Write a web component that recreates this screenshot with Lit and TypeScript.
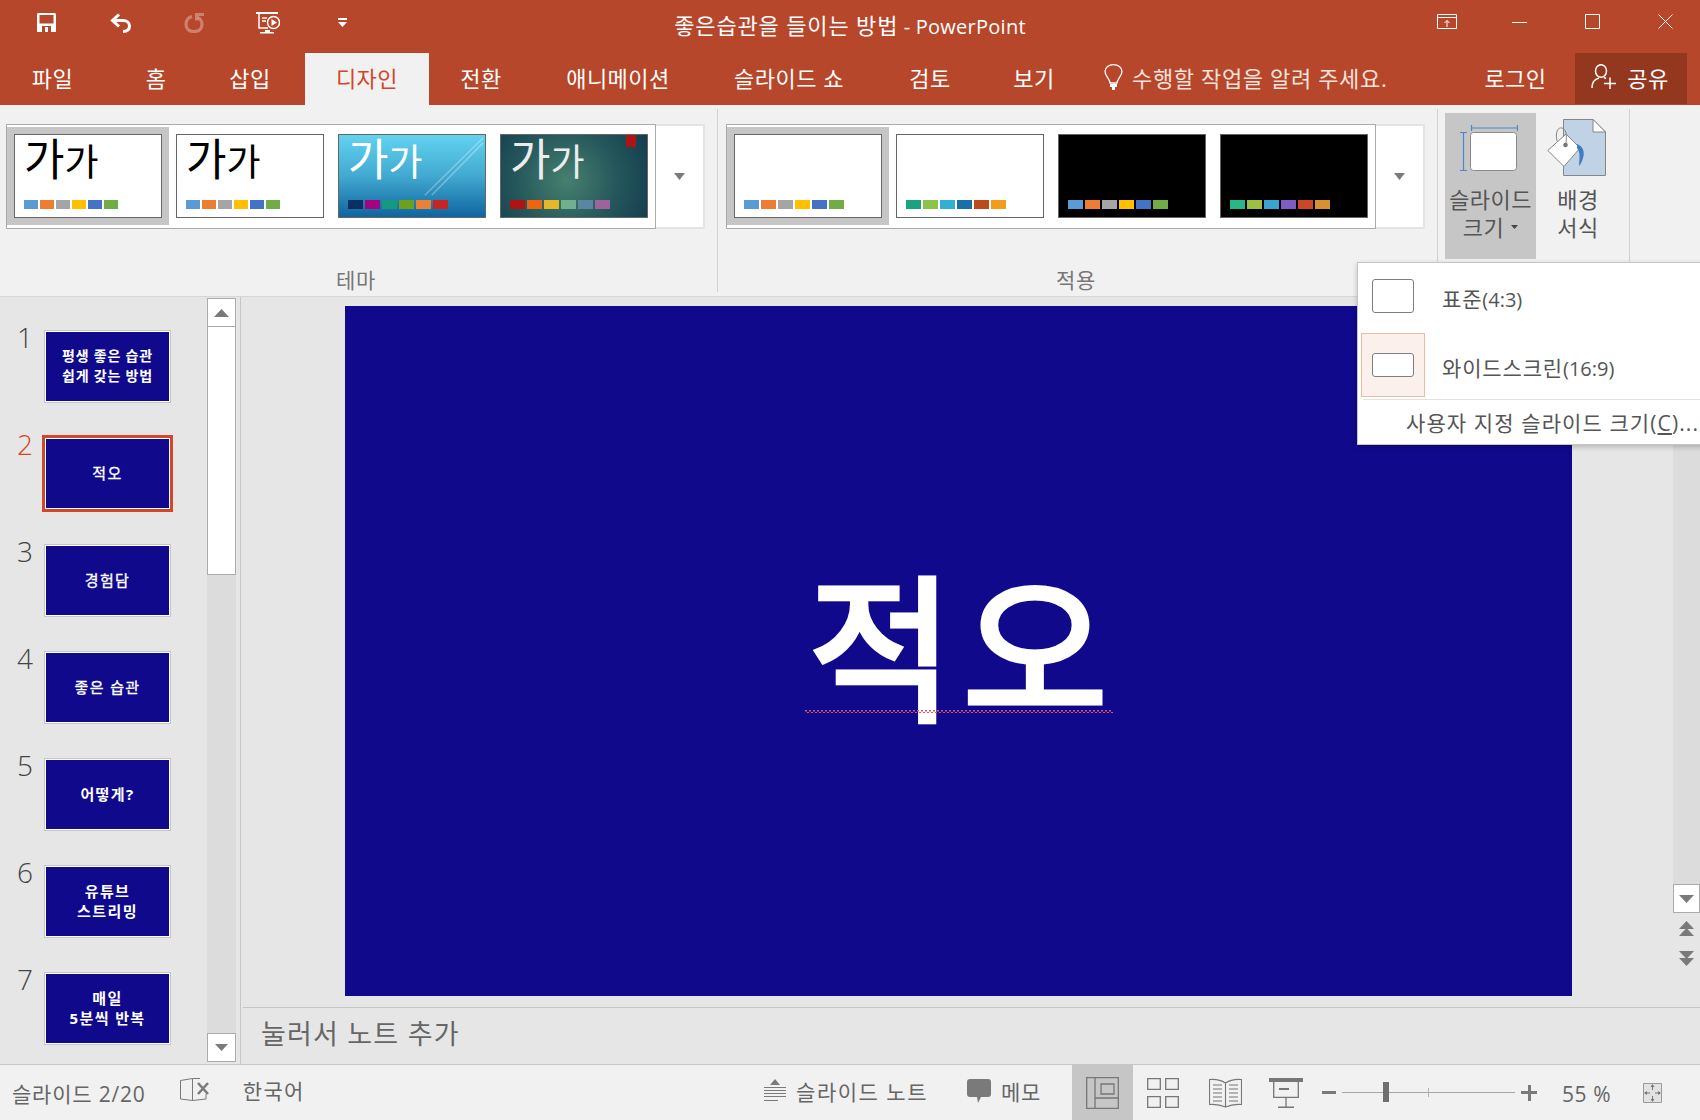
import { LitElement, html, css, svg } from 'lit';
import { customElement } from 'lit/decorators.js';

const tabs = ['파일', '홈', '삽입', '디자인', '전환', '애니메이션', '슬라이드 쇼', '검토', '보기'];

const office = ['#5b9bd5', '#ed7d31', '#a5a5a5', '#ffc000', '#4472c4', '#70ad47'];

const themes = [
  { cls: 'plain', colors: office, narrow: true },
  { cls: 'plain', colors: office, narrow: true },
  { cls: 'sky', colors: ['#0b2f63', '#a5027f', '#159a80', '#6fa01c', '#e98136', '#c72424'] },
  { cls: 'teal', colors: ['#ae1411', '#ee6510', '#e6b729', '#6fb08e', '#5a86a0', '#9e629c'] },
];

const variants = [
  { cls: 'blank', colors: office },
  { cls: 'blank', colors: ['#1ba27f', '#8cc44a', '#33afd2', '#1b6fa8', '#bb4b1a', '#f39c1a'] },
  { cls: 'dark', colors: office },
  { cls: 'dark', colors: ['#2bb58d', '#9cc044', '#3ba3d0', '#7e5cc2', '#c9482a', '#d98f32'] },
];

const slides = [
  { lines: ['평생 좋은 습관', '쉽게 갖는 방법'], bold: true, small: true },
  { lines: ['적오'] },
  { lines: ['경험담'] },
  { lines: ['좋은 습관'] },
  { lines: ['어떻게?'], bold: true },
  { lines: ['유튜브', '스트리밍'], bold: true },
  { lines: ['매일', '5분씩 반복'], bold: true },
];

const caret = (w = 12, h = 8, up = false, fill = '#7a7a7a') => html`
  <svg width=${w} height=${h} viewBox="0 0 12 8" preserveAspectRatio="none">
    <path fill=${fill} d=${up ? 'M6 0L12 8H0Z' : 'M0 0H12L6 8Z'}></path>
  </svg>
`;

const icons = {
  save: svg`<path fill="#fff" fill-rule="evenodd" d="M1 0H18L19 1V19H0V1ZM2.5 2V10.5H16.5V2ZM5 13V19H14V13ZM8 14H11V19H8Z"></path>`,
  undo: svg`<path fill="none" stroke="#fff" stroke-width="3" d="M9 1.5L2.5 7.5L9 13.5M3 7.5H13C17 7.5 19.5 10 19.5 13C19.5 16.5 17 18.5 13 18.5"></path>`,
  redo: svg`
    <path fill="none" stroke="#fff" stroke-opacity=".32" stroke-width="3.2" d="M8 3.500C4.500 4.500 2 7.500 2 11.500C2 16 5.500 18.500 10 18.500C14.500 18.500 18 16 18 11.500C18 8.500 16.500 6 14 4.500"></path>
    <path fill="#fff" fill-opacity=".32" d="M11 0H20V3H14.500V7.500H11Z"></path>
  `,
  present: svg`
    <path fill="#fff" d="M0 0H22V2H0ZM9 18H14V20H18V21.500H4V20H9Z"></path>
    <path fill="none" stroke="#fff" stroke-width="1.500" d="M3 2V16H12M6 6H11M6 9H10"></path>
    <circle cx="17.500" cy="10.500" r="6" fill="#b7472a" stroke="#fff" stroke-width="1.500"></circle>
    <path fill="#fff" d="M15.500 7L21 10.500L15.500 14Z"></path>
  `,
  ribbonOpts: svg`
    <path fill="none" stroke="#fff" d="M.5.5H19.500V14.500H.5ZM.5 3.500H19.500"></path>
    <path fill="none" stroke="#fff" d="M10 13V6.500M7.500 9L10 6.500L12.500 9"></path>
  `,
  bulb: svg`
    <path fill="none" stroke="#fff" stroke-width="1.300" d="M6 19C6 15 1 12 1 7.500C1 3.500 5 .7 9.500 .7C14 .7 18 3.500 18 7.500C18 12 13 15 13 19Z"></path>
    <path fill="#fff" d="M6 20H13V23H11V26H8V23H6Z"></path>
  `,
  person: svg`
    <ellipse cx="10" cy="7" rx="5.500" ry="6.300" fill="none" stroke="#fff" stroke-width="1.500"></ellipse>
    <path fill="none" stroke="#fff" stroke-width="1.500" d="M1 24C1 18 4 15 8 14M13 13.500L15 14.500M13 19.500H25M19 13.500V25"></path>
  `,
  slideSize: svg`
    <path fill="none" stroke="#4a86c8" stroke-width="1.200" d="M11.500 0V6M11.500 3H57.500M57.500 0V6M0 7.500H7M3.500 7.500V45.500M0 45.500H7"></path>
    <rect x="10.500" y="7.500" width="46" height="38" rx="3" fill="#fff" stroke="#8a8a8a" stroke-width="1"></rect>
  `,
  background: svg`
    <path fill="#bfd2e6" stroke="#868686" d="M16.500 .5H46L58.500 13V56.500H16.500Z"></path>
    <path fill="#fff" stroke="#868686" d="M46 .5V13H58.500Z"></path>
    <path fill="#fff" stroke="#868686" d="M19 15L.8 31.500L17 47.500L33 29Z"></path>
    <path fill="#3f7fbd" d="M30 25C36 27 38 33 36 39C35 43 33 46 32 47C32 41 34 34 30 29Z"></path>
    <path fill="none" stroke="#868686" d="M10 22C8 13 11 8 15 9C19 10 20 15 19 25"></path>
    <circle cx="18.500" cy="26" r="2.300" fill="#777"></circle>
  `,
  bookX: svg`
    <path fill="none" stroke="#7a7a7a" d="M.5 2.500L12.500 .5V22.500L.5 21ZM12.500 .5L20 .5M12.500 22.500L26 21V16"></path>
    <path fill="none" stroke="#7a7a7a" stroke-width="2.500" d="M18 5L28 16M28 5L18 16"></path>
  `,
  notes: svg`
    <path fill="#7a7a7a" d="M11 0L16 6H6Z"></path>
    <path fill="none" stroke="#7a7a7a" d="M0 8.500H22M0 11.500H22M0 14.500H22M0 17.500H22M0 21.500H14"></path>
  `,
  memo: svg`<path fill="#7a7a7a" d="M3 0H21Q24 0 24 3V15Q24 18 21 18H14L11 24L10 18H3Q0 18 0 15V3Q0 0 3 0Z"></path>`,
  normal: svg`
    <path fill="none" stroke="#777" stroke-width="1.300" d="M.7 .7H32.300V31.300H.7ZM9 .7V31.300M9 21H32.300M15 7H28V17H15Z"></path>
  `,
  grid: svg`
    <path fill="none" stroke="#777" stroke-width="1.300" d="M.7 .7H13.300V11.300H.7ZM18.700 .7H31.300V11.300H18.700ZM.7 18.700H13.300V29.300H.7ZM18.700 18.700H31.300V29.300H18.700Z"></path>
  `,
  reader: svg`
    <path fill="none" stroke="#777" stroke-width="1.100" d="M.5 1.500C6 1 12 2 16.500 5C21 2 27 1 32.500 1.500V26.500C27 26 21 27 16.500 29C12 27 6 26 .5 26.500ZM16.500 5V29M4 7H13M4 11H13M4 15H13M4 19H13M4 23H13M20 7H29M20 11H29M20 15H29M20 19H29M20 23H29"></path>
  `,
  show: svg`
    <path fill="#777" d="M0 0H34V4H0ZM10 10H20V12H10ZM9 28.500H25V30H9Z"></path>
    <path fill="none" stroke="#777" stroke-width="1.300" d="M4.700 4V19.300H29.300V4M17 19.300V29"></path>
  `,
  fit: svg`
    <path fill="#e2e2e2" stroke="#9a9a9a" d="M.5 .5H18.500V19.500H.5Z"></path>
    <path fill="none" stroke="#777" d="M9.500 2V7M9.500 13V18M2 10H7M12 10H17"></path>
    <path fill="#777" d="M9.500 1L11.500 4H7.500ZM9.500 19L7.500 16H11.500ZM1 10L4 8V12ZM18 10L15 12V8Z"></path>
  `,
};

@customElement('app-root')
export class AppRoot extends LitElement {
  static styles = css`
    :host {
      display: flex;
      flex-direction: column;
      position: relative;
      width: 1700px;
      height: 1120px;
      overflow: hidden;
      background: #e6e6e6;
      color: #444;
      font-family: 'Open Sans', 'Noto Sans CJK KR', sans-serif;
    }
    svg {
      display: block;
      flex: none;
    }

    /* title bar */
    .titlebar {
      display: grid;
      grid-template-columns: 1fr auto 1fr;
      align-items: center;
      height: 53px;
      flex: none;
      background: #b7472a;
      color: #fff;
    }
    .qat {
      display: flex;
      padding-left: 9px;
      margin-top: -8px;
    }
    .qat-btn {
      display: flex;
      justify-content: center;
      align-items: center;
      width: 74px;
      height: 32px;
    }
    .qat-more {
      display: flex;
      flex-direction: column;
      align-items: center;
      gap: 2px;
    }
    .qat-more i {
      display: block;
      width: 9px;
      height: 2px;
      background: #fff;
    }
    .title {
      margin-top: -1px;
      font-size: 20px;
      line-height: 53px;
      letter-spacing: 0.25px;
    }
    .title b {
      font-size: 22px;
      font-weight: 400;
      letter-spacing: 0.85px;
    }
    .winctl {
      display: flex;
      justify-content: flex-end;
      margin: -10px -2px 0 0;
    }
    .win-btn {
      display: flex;
      justify-content: center;
      align-items: center;
      width: 73px;
      height: 30px;
    }

    /* tabs */
    .tabs {
      display: grid;
      grid-template-columns: 117px 78px 110px 124px 104px 170px 172px 110px 98px 1fr 119px 112px;
      height: 52px;
      flex: none;
      padding-right: 13px;
      background: #b7472a;
      color: #fff;
      font-size: 22px;
      letter-spacing: 0.5px;
    }
    .tab {
      display: flex;
      justify-content: center;
      align-items: center;
      padding-bottom: 5px;
      box-sizing: border-box;
      white-space: nowrap;
    }
    .tab:first-child {
      padding-right: 12px;
    }
    .tab.active {
      background: #f1f1f1;
      color: #d24726;
    }
    .tell {
      display: flex;
      align-items: center;
      gap: 9px;
      padding: 0 0 4px 21px;
      font-size: 22px;
      letter-spacing: 0.65px;
      white-space: nowrap;
      color: #f6e3dd;
    }
    .tell span {
      margin-bottom: 1px;
    }
    .share {
      display: flex;
      justify-content: center;
      align-items: center;
      gap: 10px;
      height: 51px;
      padding: 0 2px 4px 0;
      box-sizing: border-box;
      background: #93371f;
    }

    /* ribbon */
    .ribbon {
      display: flex;
      height: 192px;
      flex: none;
      padding: 4px 0;
      box-sizing: border-box;
      background: #f1f1f1;
      border-bottom: 1px solid #d6d6d6;
    }
    .group {
      display: flex;
      flex-direction: column;
      box-sizing: border-box;
      border-right: 1px solid #d2d2d2;
    }
    .group.themes {
      width: 718px;
      padding-left: 6px;
    }
    .group.variants {
      width: 720px;
      padding-left: 8px;
    }
    .group.tools {
      flex-direction: row;
      width: 192px;
      padding: 4px 0 0 7px;
    }
    .group-label {
      margin-top: auto;
      padding: 1px 11px 0 0;
      text-align: center;
      font-size: 21px;
      line-height: 23px;
      letter-spacing: 0.6px;
      color: #777;
    }
    .gallery {
      display: flex;
      margin-top: 15px;
      height: 105px;
      align-self: flex-start;
    }
    .gallery-items {
      display: flex;
      box-sizing: border-box;
      padding: 2px 0 3px;
      border: 1px solid #ababab;
      background: #fff;
    }
    .cell {
      display: flex;
      justify-content: center;
      align-items: center;
      width: 162px;
    }
    .cell.selected {
      background: #c6c6c6;
    }
    .more {
      display: flex;
      justify-content: center;
      align-items: center;
      width: 49px;
      box-sizing: border-box;
      border: 2px solid #e4e4e4;
      border-left: 0;
      background: #fff;
    }
    .thumb {
      display: flex;
      flex-direction: column;
      justify-content: flex-end;
      position: relative;
      width: 148px;
      height: 84px;
      box-sizing: border-box;
      padding: 0 9px 8px;
      border: 1px solid #666;
    }
    .thumb.plain,
    .thumb.blank {
      background: #fff;
    }
    .thumb.dark {
      background: #000;
    }
    .thumb.sky {
      background: linear-gradient(180deg, #62d3f0 0%, #42a9d0 50%, #0f659f 100%);
      color: #fff;
    }
    .thumb.teal {
      background: radial-gradient(circle at 45% 55%, #47806f 0%, #24575b 55%, #143c4e 100%);
      color: #ececec;
    }
    .thumb-text {
      position: absolute;
      left: 9px;
      top: -1px;
      font-size: 44px;
      line-height: 50px;
      color: #000;
      white-space: nowrap;
    }
    .thumb.sky .thumb-text,
    .thumb.teal .thumb-text {
      color: inherit;
    }
    .thumb-text small {
      font-size: 37px;
    }
    .swatches {
      display: flex;
      gap: 2px;
    }
    .swatches i {
      display: block;
      width: 15px;
      height: 9px;
    }
    .swatches.narrow i {
      width: 14px;
    }
    .streak {
      position: absolute;
      inset: 0;
    }
    .flag {
      position: absolute;
      top: 0;
      right: 11px;
      width: 10px;
      height: 12px;
      background: #ae1411;
    }
    .tool {
      display: flex;
      flex-direction: column;
      align-items: center;
      box-sizing: border-box;
      height: 146px;
      font-size: 22px;
      line-height: 28px;
      letter-spacing: 0.4px;
      color: #555;
    }
    .tool.size {
      width: 91px;
      padding-top: 9px;
      background: #c6c6c6;
    }
    .tool.bg {
      width: 84px;
      padding-top: 9px;
    }
    .tool .tool-icon {
      height: 59px;
      margin-bottom: 4px;
    }
    .tool .tool-icon svg {
      margin-left: -4px;
    }
    .tool.size .tool-icon svg {
      margin-top: 3px;
    }
    .tool.bg .tool-icon svg {
      margin-top: -3px;
    }
    .tool-row {
      display: flex;
      align-items: center;
      gap: 7px;
    }

    /* body */
    .body {
      display: flex;
      flex: 1;
      min-height: 0;
    }
    .side {
      display: flex;
      width: 241px;
      flex: none;
      box-sizing: border-box;
      padding: 1px 0 2px;
      border-right: 1px solid #c6c6c6;
    }
    .slide-list {
      display: flex;
      flex-direction: column;
      width: 207px;
      flex: none;
      padding-top: 32px;
      overflow: hidden;
    }
    .slide-item {
      display: grid;
      grid-template-columns: 44px 127px;
      height: 107px;
      flex: none;
    }
    .num {
      padding-left: 6px;
      box-sizing: border-box;
      text-align: center;
      font-size: 28px;
      font-weight: 300;
      line-height: 14px;
      color: #444;
    }
    .slide-item.current .num {
      color: #d24726;
    }
    .mini {
      display: flex;
      flex-direction: column;
      justify-content: center;
      align-items: center;
      height: 73px;
      box-sizing: border-box;
      padding-bottom: 2px;
      border: 1px solid #c6c6c6;
      box-shadow: inset 0 0 0 1px #fff;
      background: #10098c;
      color: #fff;
      font-size: 15px;
      line-height: 20px;
      letter-spacing: 1.4px;
      -webkit-text-stroke: 0.3px #fff;
      white-space: nowrap;
    }
    .mini.bold {
      font-weight: 700;
      -webkit-text-stroke: 0;
    }
    .mini.small {
      font-size: 14px;
      letter-spacing: 0.8px;
    }
    .slide-item.current .mini {
      border-color: #fff;
      outline: 3px solid #d24726;
      outline-offset: -1px;
    }
    .vbar {
      display: flex;
      flex-direction: column;
      box-sizing: border-box;
      background: #dcdcdc;
    }
    .side .vbar {
      width: 29px;
      flex: none;
    }
    .vbtn {
      display: flex;
      justify-content: center;
      align-items: center;
      height: 29px;
      flex: none;
      box-sizing: border-box;
      border: 1px solid #ababab;
      background: #fff;
    }
    .vthumb {
      height: 248px;
      flex: none;
      box-sizing: border-box;
      border: 1px solid #ababab;
      border-top: 0;
      background: #fff;
    }
    .vtrack {
      flex: 1;
    }

    .main {
      display: flex;
      flex-direction: column;
      flex: 1;
      min-width: 0;
      padding-left: 2px;
    }
    .editor {
      display: flex;
      flex: 1;
      min-height: 0;
    }
    .stage {
      flex: 1;
      padding: 9px 0 0 102px;
    }
    .slide {
      display: flex;
      justify-content: center;
      align-items: center;
      position: relative;
      width: 1227px;
      height: 690px;
      background: #10098c;
      color: #fff;
      font-size: 158px;
      line-height: 1;
      letter-spacing: 9px;
      -webkit-text-stroke: 5px #fff;
    }
    .slide-title {
      position: relative;
      top: -3px;
      left: 4px;
    }
    .squiggle {
      position: absolute;
      left: 460px;
      top: 404px;
      width: 308px;
      height: 3px;
      background:
        repeating-linear-gradient(90deg, #e2536a 0 2px, transparent 2px 4px) 0 0 / 100% 1.500px no-repeat,
        repeating-linear-gradient(90deg, transparent 0 2px, #e2536a 2px 4px) 0 100% / 100% 1.500px no-repeat;
    }
    .editor .vbar {
      width: 27px;
      flex: none;
      background: #e6e6e6;
    }
    .editor .vtrack {
      background: #dcdcdc;
    }
    .nav {
      display: flex;
      flex-direction: column;
      align-items: center;
      gap: 15px;
      padding: 8px 0 41px;
    }
    .double {
      display: flex;
      flex-direction: column;
    }
    .double svg + svg {
      margin-top: -1px;
    }
    .notes {
      display: flex;
      align-items: center;
      height: 56px;
      flex: none;
      box-sizing: border-box;
      padding: 0 0 6px 18px;
      border-top: 1px solid #c6c6c6;
      font-size: 27px;
      letter-spacing: 1.2px;
      color: #666;
      margin-bottom: 1px;
    }

    /* status bar */
    .status {
      display: flex;
      align-items: stretch;
      height: 55px;
      flex: none;
      background: #f1f1f1;
      border-top: 1px solid #c6c6c6;
      font-size: 21px;
      letter-spacing: 0.7px;
      color: #666;
    }
    .status-left {
      display: flex;
      align-items: center;
      padding-left: 12px;
      flex: 1;
    }
    .status-left .pages {
      letter-spacing: 0.8px;
    }
    .status-left svg {
      margin: -6px 34px 0 34px;
    }
    .status-left .lang {
      padding-bottom: 5px;
      letter-spacing: 1.4px;
    }
    .status-item {
      display: flex;
      align-items: center;
      gap: 10px;
      padding-bottom: 4px;
    }
    .status-item.notes-btn {
      margin-right: 39px;
      letter-spacing: 1.5px;
    }
    .status-item.memo-btn {
      margin-right: 31px;
    }
    .view {
      display: flex;
      justify-content: center;
      align-items: center;
      width: 61px;
      margin-right: 14px;
    }
    .view.active {
      background: #c6c6c6;
      margin-right: 0;
    }
    .view.tight {
      width: 44px;
      margin-right: 17px;
    }
    .view.first {
      width: 46px;
      margin: 0 17px 0 7px;
    }
    .zoom {
      display: flex;
      align-items: center;
      gap: 6px;
      margin-left: -3px;
    }
    .zoom-sign {
      position: relative;
      width: 14px;
      height: 3px;
      background: #7a7a7a;
    }
    .zoom-sign.plus {
      width: 16px;
    }
    .zoom-sign.plus::after {
      content: '';
      position: absolute;
      left: 6.500px;
      top: -6.500px;
      width: 3px;
      height: 16px;
      background: #7a7a7a;
    }
    .zoom-track {
      position: relative;
      width: 173px;
      height: 1px;
      background: #a6a6a6;
    }
    .zoom-track::before {
      content: '';
      position: absolute;
      left: 86px;
      top: -4px;
      width: 1px;
      height: 9px;
      background: #b4b4b4;
    }
    .zoom-handle {
      position: absolute;
      left: 41px;
      top: -10px;
      width: 6px;
      height: 20px;
      background: #6f6f6f;
    }
    .zoom-pct {
      width: 50px;
      margin-left: 25px;
      padding: 3px 0 0;
      font-size: 21px;
      letter-spacing: 0.6px;
      white-space: nowrap;
    }
    .fit-btn {
      display: flex;
      align-items: center;
      padding: 0 38px 0 31px;
    }

    /* slide size menu */
    .menu {
      position: absolute;
      left: 1357px;
      top: 262px;
      width: 360px;
      height: 183px;
      box-sizing: border-box;
      padding: 1px 0 0 3px;
      background: #fff;
      border: 1px solid #c6c6c6;
      box-shadow: 0 2px 5px rgba(0, 0, 0, 0.22);
      font-size: 21px;
      letter-spacing: 0.85px;
      color: #555;
      white-space: nowrap;
    }
    .menu-item {
      display: flex;
      align-items: center;
      gap: 17px;
      height: 64px;
      margin-bottom: 5px;
    }
    .menu-icon {
      display: flex;
      justify-content: center;
      align-items: center;
      width: 64px;
      height: 64px;
      box-sizing: border-box;
    }
    .menu-item.hover .menu-icon {
      background: #fbf0ec;
      border: 1px solid #f4b9a1;
    }
    .menu-icon i {
      display: block;
      width: 42px;
      height: 34px;
      box-sizing: border-box;
      border: 1px solid #7f7f7f;
      border-radius: 3px;
      background: #fff;
    }
    .menu-item.hover .menu-icon i {
      height: 24px;
    }
    .menu-label {
      padding-top: 3px;
    }
    .menu-label em {
      font-style: normal;
      letter-spacing: 0;
      font-size: 20px;
    }
    .menu-custom {
      margin: -3px 0 0 2px;
      padding: 7px 0 0 43px;
      border-top: 1px solid #e2e2e2;
      letter-spacing: 1.1px;
    }
    .menu-custom u {
      text-underline-offset: 2px;
    }
  `;

  private icon(body: unknown, w: number, h: number) {
    return html`<svg width=${w} height=${h} viewBox="0 0 ${w} ${h}">${body}</svg>`;
  }

  private renderSwatches(colors: string[], narrow = false) {
    return html`
      <div class="swatches ${narrow ? 'narrow' : ''}">
        ${colors.map((c) => html`<i style="background:${c}"></i>`)}
      </div>
    `;
  }

  private renderGallery(
    items: { cls: string; colors: string[]; narrow?: boolean }[],
    withText: boolean,
  ) {
    return html`
      <div class="gallery">
        <div class="gallery-items">
          ${items.map(
            (t, i) => html`
              <div class="cell ${i === 0 ? 'selected' : ''}">
                <div class="thumb ${t.cls}">
                  ${t.cls === 'sky'
                    ? html`<svg class="streak" viewBox="0 0 148 84">
                        <path d="M146 3L87 61M146 8L94 61" stroke="#fff" stroke-width="1.5" stroke-opacity=".3" fill="none"></path>
                      </svg>`
                    : ''}
                  ${t.cls === 'teal' ? html`<div class="flag"></div>` : ''}
                  ${withText ? html`<div class="thumb-text">가<small>가</small></div>` : ''}
                  ${this.renderSwatches(t.colors, t.narrow)}
                </div>
              </div>
            `,
          )}
        </div>
        <div class="more">${caret(11, 7)}</div>
      </div>
    `;
  }

  render() {
    return html`
      <div class="titlebar">
        <div class="qat">
          <div class="qat-btn">${this.icon(icons.save, 19, 19)}</div>
          <div class="qat-btn">${this.icon(icons.undo, 21, 20)}</div>
          <div class="qat-btn">${this.icon(icons.redo, 21, 20)}</div>
          <div class="qat-btn">${this.icon(icons.present, 24, 22)}</div>
          <div class="qat-btn">
            <div class="qat-more"><i></i>${caret(9, 5, false, '#fff')}</div>
          </div>
        </div>
        <div class="title"><b>좋은습관을 들이는 방법</b> - PowerPoint</div>
        <div class="winctl">
          <div class="win-btn">${this.icon(icons.ribbonOpts, 20, 15)}</div>
          <div class="win-btn">
            <svg width="15" height="15" viewBox="0 0 15 15"><path stroke="#fff" d="M0 8.500H15"></path></svg>
          </div>
          <div class="win-btn">
            <svg width="15" height="15" viewBox="0 0 15 15"><path fill="none" stroke="#fff" d="M.5 .5H14.500V14.500H.5Z"></path></svg>
          </div>
          <div class="win-btn">
            <svg width="15" height="15" viewBox="0 0 15 15"><path stroke="#fff" d="M.5 .5L14.500 14.500M14.500 .5L.5 14.500"></path></svg>
          </div>
        </div>
      </div>

      <div class="tabs">
        ${tabs.map((t) => html`<div class="tab ${t === '디자인' ? 'active' : ''}">${t}</div>`)}
        <div class="tell">${this.icon(icons.bulb, 19, 26)}<span>수행할 작업을 알려 주세요.</span></div>
        <div class="tab">로그인</div>
        <div class="share">${this.icon(icons.person, 26, 26)}<span>공유</span></div>
      </div>

      <div class="ribbon">
        <div class="group themes">
          ${this.renderGallery(themes, true)}
          <div class="group-label">테마</div>
        </div>
        <div class="group variants">
          ${this.renderGallery(variants, false)}
          <div class="group-label">적용</div>
        </div>
        <div class="group tools">
          <div class="tool size">
            <div class="tool-icon">${this.icon(icons.slideSize, 58, 50)}</div>
            <span>슬라이드</span>
            <div class="tool-row">크기 ${caret(7, 4, false, '#444')}</div>
          </div>
          <div class="tool bg">
            <div class="tool-icon">${this.icon(icons.background, 59, 57)}</div>
            <span>배경</span>
            <span>서식</span>
          </div>
        </div>
      </div>

      <div class="body">
        <div class="side">
          <div class="slide-list">
            ${slides.map(
              (s, i) => html`
                <div class="slide-item ${i === 1 ? 'current' : ''}">
                  <div class="num">${i + 1}</div>
                  <div class="mini ${s.bold ? 'bold' : ''} ${s.small ? 'small' : ''}">
                    ${s.lines.map((l) => html`<div>${l}</div>`)}
                  </div>
                </div>
              `,
            )}
          </div>
          <div class="vbar">
            <div class="vbtn">${caret(15, 8, true)}</div>
            <div class="vthumb"></div>
            <div class="vtrack"></div>
            <div class="vbtn">${caret(13, 7)}</div>
          </div>
        </div>

        <div class="main">
          <div class="editor">
            <div class="stage">
              <div class="slide">
                <span class="slide-title">적오</span>
                <div class="squiggle"></div>
              </div>
            </div>
            <div class="vbar">
              <div class="vtrack"></div>
              <div class="vbtn">${caret(15, 8)}</div>
              <div class="nav">
                <div class="double">${caret(15, 8, true)}${caret(15, 8, true)}</div>
                <div class="double">${caret(15, 8)}${caret(15, 8)}</div>
              </div>
            </div>
          </div>
          <div class="notes">눌러서 노트 추가</div>
        </div>
      </div>

      <div class="status">
        <div class="status-left">
          <span class="pages">슬라이드 2/20</span>
          ${this.icon(icons.bookX, 29, 24)}
          <span class="lang">한국어</span>
        </div>
        <div class="status-item notes-btn">${this.icon(icons.notes, 22, 23)}<span>슬라이드 노트</span></div>
        <div class="status-item memo-btn">${this.icon(icons.memo, 24, 24)}<span>메모</span></div>
        <div class="view active">${this.icon(icons.normal, 33, 32)}</div>
        <div class="view first">${this.icon(icons.grid, 32, 30)}</div>
        <div class="view tight">${this.icon(icons.reader, 33, 30)}</div>
        <div class="view tight">${this.icon(icons.show, 34, 30)}</div>
        <div class="zoom">
          <div class="zoom-sign"></div>
          <div class="zoom-track"><div class="zoom-handle"></div></div>
          <div class="zoom-sign plus"></div>
        </div>
        <div class="zoom-pct status-item">55 %</div>
        <div class="fit-btn">${this.icon(icons.fit, 19, 20)}</div>
      </div>

      <div class="menu">
        <div class="menu-item">
          <div class="menu-icon"><i></i></div>
          <span class="menu-label">표준<em>(4:3)</em></span>
        </div>
        <div class="menu-item hover">
          <div class="menu-icon"><i></i></div>
          <span class="menu-label">와이드스크린<em>(16:9)</em></span>
        </div>
        <div class="menu-custom">사용자 지정 슬라이드 크기(<u>C</u>)...</div>
      </div>
    `;
  }
}
